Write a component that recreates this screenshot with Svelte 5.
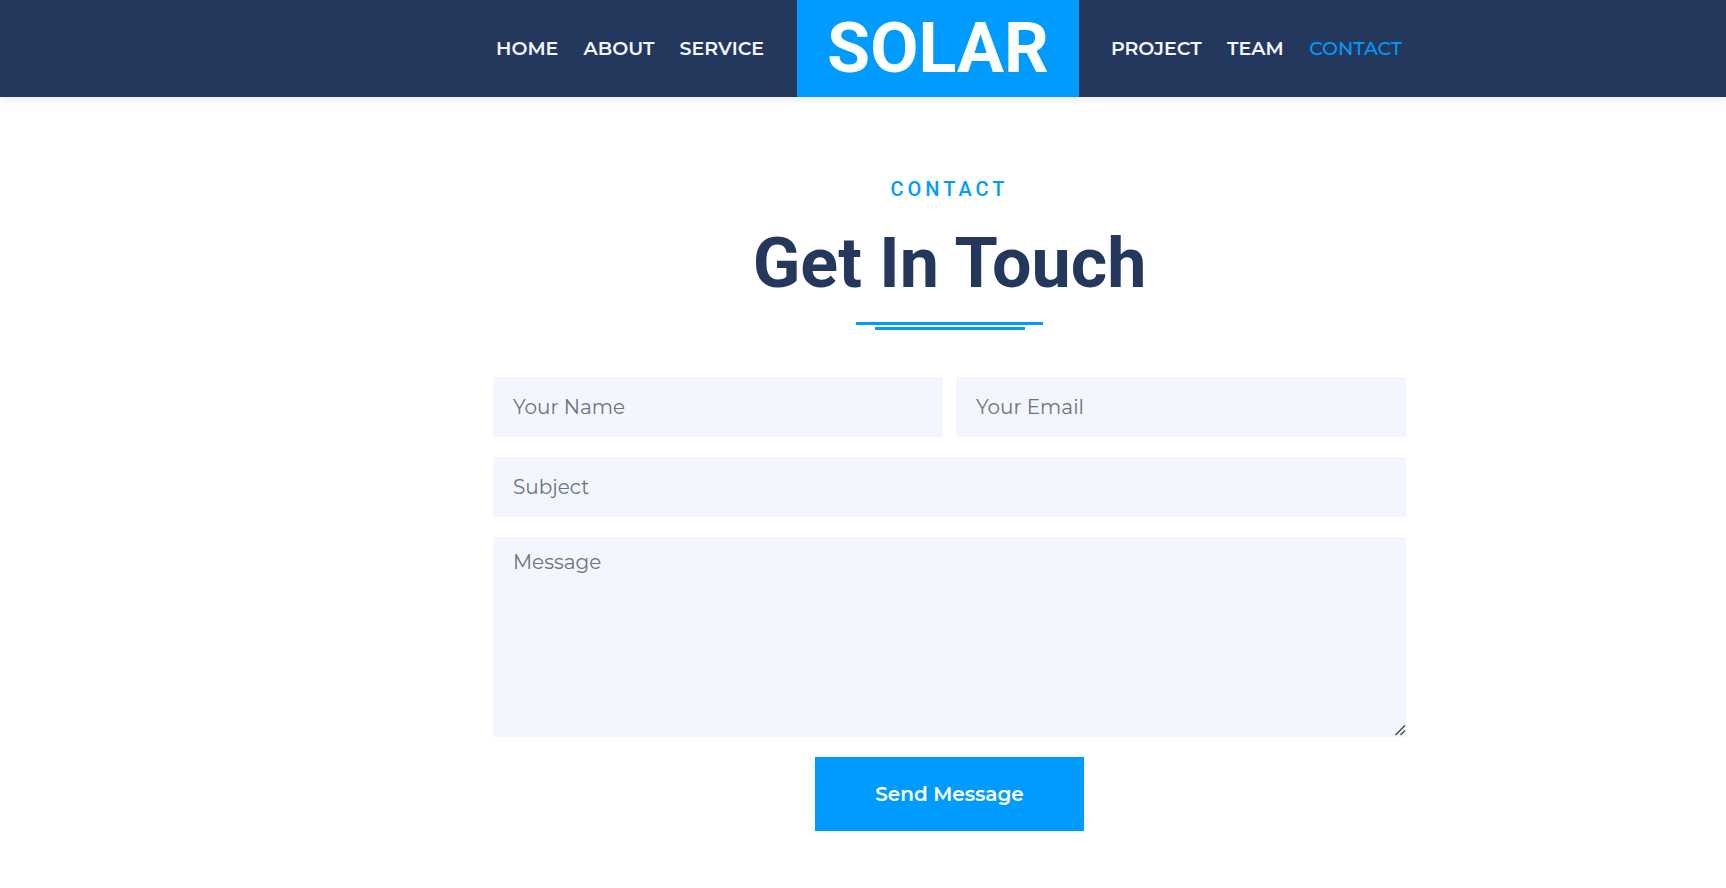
<script>
  const before = ['Home', 'About', 'Service'];
  const after = ['Project', 'Team', 'Contact'];
  const current = 'Contact';

  let name = $state('');
  let email = $state('');
  let subject = $state('');
  let message = $state('');
</script>

{#snippet links(items)}
  <div class="links">
    {#each items as item}
      <a
        href={`#${item.toLowerCase()}`}
        class:active={item === current}
        aria-current={item === current ? 'page' : undefined}>{item}</a
      >
    {/each}
  </div>
{/snippet}

<header>
  <nav class="bar">
    {@render links(before)}
    <a class="brand" href="#home">SOLAR</a>
    {@render links(after)}
  </nav>
</header>

<main>
  <section>
    <div class="heading">
      <p>Contact</p>
      <h1>Get In Touch</h1>
      <div class="rules"></div>
    </div>
    <form onsubmit={(e) => e.preventDefault()}>
      <input type="text" placeholder="Your Name" aria-label="Your Name" bind:value={name} />
      <input type="email" placeholder="Your Email" aria-label="Your Email" bind:value={email} />
      <input class="wide" type="text" placeholder="Subject" aria-label="Subject" bind:value={subject} />
      <textarea class="wide" placeholder="Message" aria-label="Message" bind:value={message}></textarea>
      <button class="wide" type="submit">Send Message</button>
    </form>
  </section>
</main>

<style>
  :global(body) {
    margin: 0;
    background: #fff;
    font-family: Montserrat, Inter, sans-serif;
    font-size: 20px;
  }

  header,
  main {
    display: grid;
    grid-template-columns: 493fr 913fr 320fr;
  }

  header {
    background: #24385d;
    box-shadow: 0 2px 8px rgba(0, 0, 0, 0.1);
  }

  .bar {
    grid-column: 2;
    display: grid;
    grid-template-columns: 304fr auto 327fr;
  }

  .links {
    display: flex;
    justify-content: space-between;
    align-items: center;
    padding: 0 33px 0 3px;
  }

  .links:last-child {
    padding: 0 4px 0 32px;
  }

  .links a {
    color: #f3f6ff;
    font-size: 19px;
    font-weight: 600;
    line-height: 24px;
    text-decoration: none;
    text-transform: uppercase;
  }

  .links a.active {
    color: #009bff;
    font-weight: 500;
  }

  .brand {
    padding: 6px 30px 7px;
    background: #009bff;
    color: #fff;
    font: 700 70px/84px Roboto, sans-serif;
    text-decoration: none;
  }

  section {
    grid-column: 2;
    padding: 80px 0 56px;
  }

  .heading {
    display: flex;
    flex-direction: column;
    align-items: center;
    font-family: Roboto, sans-serif;
  }

  .heading p {
    margin: 0;
    color: #009bff;
    font-size: 20px;
    font-weight: 500;
    line-height: 24px;
    letter-spacing: 4px;
    text-transform: uppercase;
  }

  h1 {
    margin: 20px 0 17px;
    color: #24385d;
    font-size: 70px;
    font-weight: 700;
    line-height: 84px;
    text-align: center;
  }

  .rules {
    width: 187px;
    border-top: 3px solid #009bff;
    padding-top: 2px;
  }

  .rules::after {
    content: '';
    display: block;
    width: 150px;
    height: 3px;
    margin: 0 auto;
    background: #009bff;
  }

  form {
    display: grid;
    grid-template-columns: 1fr 1fr;
    gap: 20px 13px;
    margin-top: 47px;
  }

  .wide {
    grid-column: 1 / -1;
  }

  input,
  textarea {
    box-sizing: border-box;
    min-width: 0;
    height: 60px;
    margin: 0;
    border: 0;
    border-radius: 0;
    padding: 10px 20px;
    background: #f3f6ff;
    color: #24385d;
    font: 400 20px/30px Montserrat, Inter, sans-serif;
  }

  textarea {
    height: 200px;
    resize: vertical;
  }

  textarea::-webkit-resizer {
    background: url("data:image/svg+xml,%3Csvg xmlns='http://www.w3.org/2000/svg' width='15' height='15' fill='none' stroke='%23444' stroke-width='1.4'%3E%3Cpath d='M4.5 13 14 3.5M9.5 13 14 8.5'/%3E%3C/svg%3E")
      right bottom no-repeat;
  }

  ::placeholder {
    color: #6c757d;
    opacity: 1;
  }

  button {
    justify-self: center;
    border: 0;
    padding: 22px 60px;
    background: #009bff;
    color: #fff;
    font: 600 20px/30px Montserrat, Inter, sans-serif;
    cursor: pointer;
  }
</style>
